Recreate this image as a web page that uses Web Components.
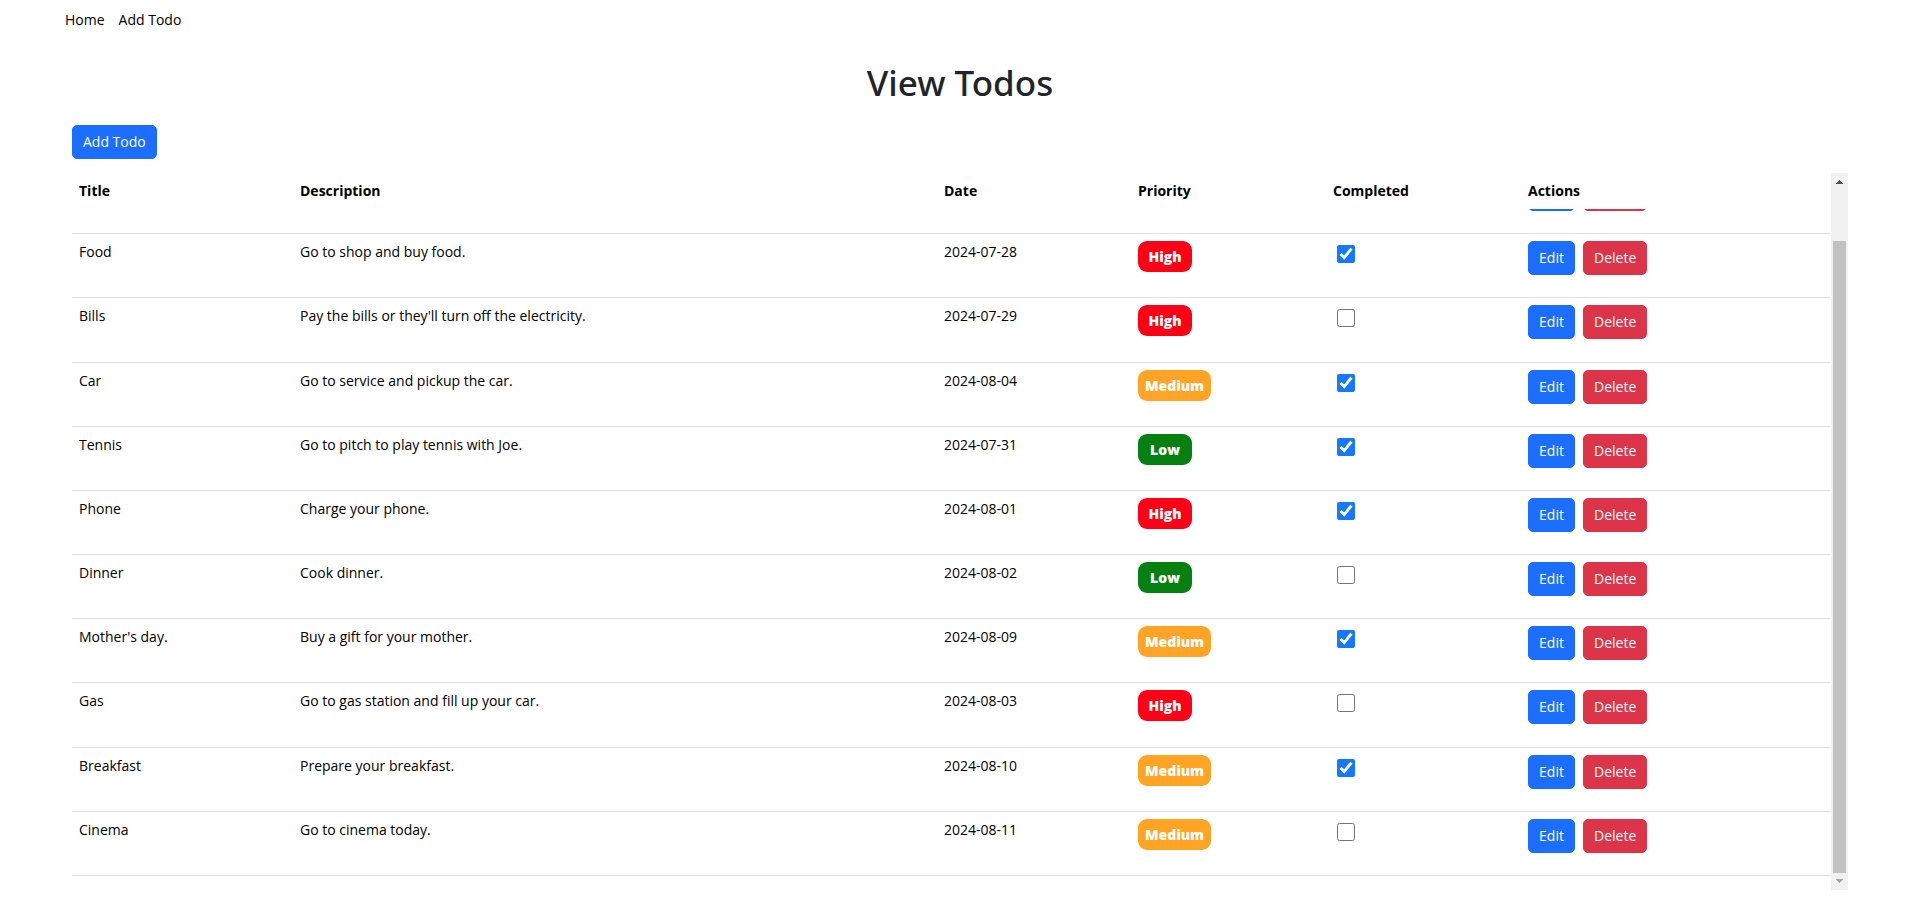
<!DOCTYPE html>
<html lang="en">
<head>
<meta charset="utf-8">
<title>Todos</title>
<style>
  body { margin: 0; background: #fff; color: #000; font: 14px/22px "Open Sans", "Noto Sans", sans-serif; }
</style>
</head>
<body>
<todo-app>
  <todo-nav slot="nav"></todo-nav>
  <h1 slot="title">View Todos</h1>
  <todo-button slot="toolbar">Add Todo</todo-button>
  <todo-scroller><todo-table></todo-table></todo-scroller>
</todo-app>
<script>
const define = (name, html, setup) => {
  const template = document.createElement('template');
  template.innerHTML = html;
  customElements.define(name, class extends HTMLElement {
    constructor() {
      super();
      this.attachShadow({ mode: 'open' }).append(template.content.cloneNode(true));
    }
    connectedCallback() { if (setup) setup(this.shadowRoot); }
  });
};

define('todo-button', `
  <style>
    :host { display: inline-block; vertical-align: top; }
    button {
      display: block; box-sizing: border-box; min-width: 47px; min-height: 34px; padding: 5px 10px;
      border: 1px solid #1b6eff; border-radius: 5px; background: #1b6eff;
      color: #fff; font: inherit; cursor: pointer;
    }
    :host([variant="danger"]) button { min-width: 64px; background: #dc3549; border-color: #dc3549; }
  </style>
  <button type="button"><slot></slot></button>`);

define('priority-badge', `
  <style>
    :host {
      display: inline-block; box-sizing: border-box; min-width: 54px; padding: 5px 7px 4px;
      border-radius: 9px; color: #fff; background: #ff0016; font-weight: 800; text-align: center;
      vertical-align: top;
    }
    :host([level="Medium"]) { background: #ffa425; }
    :host([level="Low"]) { background: #078012; }
  </style>
  <slot></slot>`);

define('todo-nav', `
  <style>
    :host { display: block; padding: 9px 65px; }
    nav { display: flex; gap: 14px; }
    a { color: #000; text-decoration: none; }
  </style>
  <nav><a href="#home">Home</a><a href="#add">Add Todo</a></nav>`);

define('todo-table', `
  <style>
    :host { display: block; }
    table { width: 100%; height: 742px; table-layout: fixed; border-collapse: separate; border-spacing: 0; }
    .c-title { width: 221px; }
    .c-date { width: 194px; }
    .c-state { width: 195px; }
    .c-actions { width: 310px; }
    th, td { padding: 7px; text-align: left; vertical-align: top; }
    thead { position: sticky; top: 0; z-index: 1; background: #fff; }
    thead tr { height: 36px; }
    th { font-weight: 700; }
    tbody tr { height: 64px; }
    td { border-bottom: 1px solid #dee0e3; }
    input { display: block; width: 18px; height: 18px; margin: 4px; accent-color: #1677ff; }
    .actions { display: flex; gap: 8px; }
  </style>
  <table>
    <colgroup>
      <col class="c-title"><col><col class="c-date"><col class="c-state"><col class="c-state"><col class="c-actions">
    </colgroup>
    <thead>
      <tr><th>Title</th><th>Description</th><th>Date</th><th>Priority</th><th>Completed</th><th>Actions</th></tr>
    </thead>
    <tbody></tbody>
  </table>`, (root) => {
  const todos = [
    ['', '', '', '', null],
    ['Food', 'Go to shop and buy food.', '2024-07-28', 'High', true],
    ['Bills', "Pay the bills or they'll turn off the electricity.", '2024-07-29', 'High', false],
    ['Car', 'Go to service and pickup the car.', '2024-08-04', 'Medium', true],
    ['Tennis', 'Go to pitch to play tennis with Joe.', '2024-07-31', 'Low', true],
    ['Phone', 'Charge your phone.', '2024-08-01', 'High', true],
    ['Dinner', 'Cook dinner.', '2024-08-02', 'Low', false],
    ["Mother's day.", 'Buy a gift for your mother.', '2024-08-09', 'Medium', true],
    ['Gas', 'Go to gas station and fill up your car.', '2024-08-03', 'High', false],
    ['Breakfast', 'Prepare your breakfast.', '2024-08-10', 'Medium', true],
    ['Cinema', 'Go to cinema today.', '2024-08-11', 'Medium', false],
  ];
  root.querySelector('tbody').innerHTML = todos.map(([title, text, date, level, done]) => `
    <tr>
      <td>${title}</td><td>${text}</td><td>${date}</td>
      <td>${level && `<priority-badge level="${level}">${level}</priority-badge>`}</td>
      <td>${done === null ? '' : `<input type="checkbox" aria-label="${title} completed"${done ? ' checked' : ''}>`}</td>
      <td><div class="actions"><todo-button>${title && 'Edit'}</todo-button><todo-button variant="danger">${title && 'Delete'}</todo-button></div></td>
    </tr>`).join('');
});

define('todo-app', `
  <style>
    :host { display: flex; flex-direction: column; box-sizing: border-box; height: 100vh; padding-bottom: 21px; }
    ::slotted(h1) { margin: 21px 0; font: 500 35px/43px "Noto Sans", sans-serif; color: #212529; text-align: center; }
    main { flex: 1; min-height: 0; display: flex; flex-direction: column; padding: 0 72px; }
    .toolbar { margin-bottom: 14px; }
    ::slotted(todo-scroller) { flex: 1; }
  </style>
  <slot name="nav"></slot>
  <main>
    <slot name="title"></slot>
    <div class="toolbar"><slot name="toolbar"></slot></div>
    <slot></slot>
  </main>`);

// Defined last: it measures the finished page to open at the end of the list.
define('todo-scroller', `
  <style>
    :host { display: flex; min-height: 0; }
    .view { flex: 1; min-width: 0; overflow-y: scroll; scrollbar-width: none; }
    .content { padding-bottom: 14px; }
    .bar { flex: none; width: 17px; display: flex; flex-direction: column; background: #f1f1f1; }
    svg { flex: none; width: 17px; height: 17px; display: block; }
    .track { flex: 1; display: flex; flex-direction: column; justify-content: flex-end; padding: 0 2px; }
    .thumb { height: 92.5%; background: #c1c1c1; }
  </style>
  <div class="view"><div class="content"><slot></slot></div></div>
  <div class="bar" aria-hidden="true">
    <svg viewBox="0 0 17 17" shape-rendering="crispEdges"><path fill="#505050" d="M8 7h1v1h1v1h1v1h1v1H5v-1h1V9h1V8h1z"/></svg>
    <div class="track"><div class="thumb"></div></div>
    <svg viewBox="0 0 17 17" shape-rendering="crispEdges"><path fill="#a3a3a3" d="M5 6h7v1h-1v1h-1v1H9v1H8V9H7V8H6V7H5z"/></svg>
  </div>`, (root) => {
  const view = root.querySelector('.view');
  view.scrollTop = view.scrollHeight;
});
</script>
</body>
</html>
